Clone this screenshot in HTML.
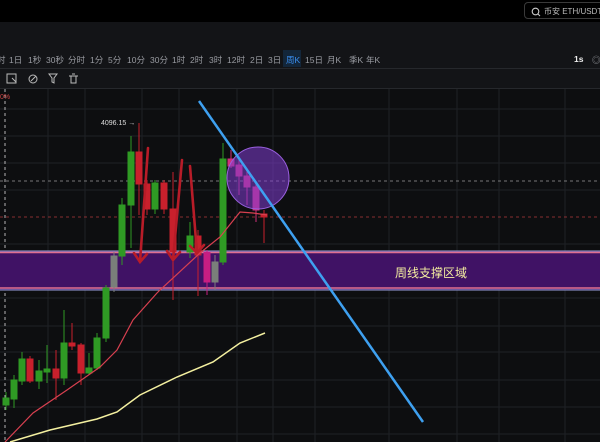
<!DOCTYPE html>
<html><head><meta charset="utf-8"><style>
body{margin:0;width:600px;height:442px;overflow:hidden;background:#0d0e10;font-family:"Liberation Sans","Noto Sans CJK SC",sans-serif;position:relative}
.top{position:absolute;left:0;top:0;width:600px;height:22px;background:#000}
.search{position:absolute;left:524px;top:2px;width:90px;height:17px;border:1px solid #3a3a3a;border-radius:4px;color:#bbb;font-size:8px;line-height:17px;box-sizing:border-box;padding-left:19px}
.bar2{position:absolute;left:0;top:22px;width:600px;height:27px;background:#131417;border-bottom:1px solid #26282c}
.tf{position:absolute;left:0;top:49px;width:600px;height:19px;background:#131417;border-bottom:1px solid #26282c;color:#9a9ca2;font-size:8.5px}
.tf span{position:absolute;top:5px}
.tools{position:absolute;left:0;top:69px;width:600px;height:19px;background:#131417;border-bottom:1px solid #26282c}
svg{position:absolute;left:0;top:0}
</style></head><body>
<div class="top"></div>
<div class="search"><svg width="10" height="10" style="left:6px;top:4px"><circle cx="4.5" cy="4.5" r="3.3" fill="none" stroke="#ccc" stroke-width="1.1"/><line x1="7" y1="7" x2="9" y2="9" stroke="#ccc"/></svg>币安 ETH/USDT</div>
<div class="bar2"></div>
<div class="tf">
<span style="left:-3px">时</span><span style="left:9px">1日</span><span style="left:28px">1秒</span><span style="left:46px">30秒</span><span style="left:68px">分时</span><span style="left:90px">1分</span><span style="left:108px">5分</span><span style="left:127px">10分</span><span style="left:150px">30分</span><span style="left:172px">1时</span><span style="left:190px">2时</span><span style="left:209px">3时</span><span style="left:227px">12时</span><span style="left:250px">2日</span><span style="left:268px">3日</span>
<span style="left:283px;top:1px;width:18px;height:17px;background:#13263a"></span><span style="left:286px;color:#3a8ef0">周K</span>
<span style="left:305px">15日</span><span style="left:327px">月K</span><span style="left:349px">季K</span><span style="left:366px">年K</span>
<span style="left:574px;color:#eee;font-weight:bold">1s</span><span style="left:592px">◎</span>
</div>
<div class="tools"><svg width="90" height="19" style="left:0;top:0">
<rect x="7" y="5" width="9" height="9" fill="none" stroke="#bbb"/><path d="M12 9l4 4" stroke="#bbb"/>
<circle cx="33" cy="10" r="4" fill="none" stroke="#bbb"/><path d="M31 12l5-5" stroke="#bbb"/>
<path d="M49 5h8l-3 4v5l-2-1v-4z" fill="none" stroke="#bbb"/>
<path d="M69 7h9M71 7v7h5v-7M72 5h3" fill="none" stroke="#bbb"/>
</svg></div>
<svg width="600" height="442" viewBox="0 0 600 442">
<g stroke="#1f2126" stroke-width="1">
<line x1="48" y1="89" x2="48" y2="442"/><line x1="85" y1="89" x2="85" y2="442"/><line x1="142" y1="89" x2="142" y2="442"/><line x1="179" y1="89" x2="179" y2="442"/><line x1="237" y1="89" x2="237" y2="442"/><line x1="273" y1="89" x2="273" y2="442"/><line x1="315" y1="89" x2="315" y2="442"/><line x1="389" y1="89" x2="389" y2="442"/><line x1="457" y1="89" x2="457" y2="442"/><line x1="499" y1="89" x2="499" y2="442"/><line x1="565" y1="89" x2="565" y2="442"/>
<line x1="0" y1="109" x2="600" y2="109"/><line x1="0" y1="136" x2="600" y2="136"/><line x1="0" y1="163" x2="600" y2="163"/><line x1="0" y1="190" x2="600" y2="190"/><line x1="0" y1="244" x2="600" y2="244"/><line x1="0" y1="298" x2="600" y2="298"/><line x1="0" y1="326" x2="600" y2="326"/><line x1="0" y1="352" x2="600" y2="352"/><line x1="0" y1="380" x2="600" y2="380"/><line x1="0" y1="407" x2="600" y2="407"/><line x1="0" y1="434" x2="600" y2="434"/>
</g>
<line x1="5" y1="89" x2="5" y2="442" stroke="#ddd" stroke-dasharray="3,3" stroke-width="0.8"/>
<line x1="0" y1="181" x2="600" y2="181" stroke="#999" stroke-dasharray="3,3" stroke-width="0.8"/>
<line x1="0" y1="217" x2="600" y2="217" stroke="#b0383c" stroke-dasharray="3,3" stroke-width="0.8"/>
<text x="0" y="99" fill="#c44" font-size="7">0%</text>
<rect x="0" y="251" width="600" height="39" fill="#401265"/>
<line x1="0" y1="251" x2="600" y2="251" stroke="#9aa0e0" stroke-width="1"/>
<line x1="0" y1="252.5" x2="600" y2="252.5" stroke="#e07090" stroke-width="1.5"/>
<line x1="0" y1="288" x2="600" y2="288" stroke="#e07090" stroke-width="1.5"/>
<line x1="0" y1="290" x2="600" y2="290" stroke="#9aa0e0" stroke-width="1"/>
<text x="395" y="277" fill="#f4eea0" font-size="12" font-family="Liberation Sans,Noto Sans CJK SC,sans-serif">周线支撑区域</text>
<g stroke-width="1">
<g fill="#2f9a24" stroke="#2f9a24">
<line x1="6" y1="392" x2="6" y2="410"/><rect x="3" y="398" width="6" height="7"/>
<line x1="14" y1="375" x2="14" y2="408"/><rect x="11" y="380" width="6" height="19"/>
<line x1="22" y1="352" x2="22" y2="385"/><rect x="19" y="359" width="6" height="22"/>
<line x1="39" y1="360" x2="39" y2="389"/><rect x="36" y="371" width="6" height="10"/>
<line x1="47" y1="345" x2="47" y2="383"/><rect x="44" y="369" width="6" height="3"/>
<line x1="64" y1="310" x2="64" y2="385"/><rect x="61" y="343" width="6" height="35"/>
<line x1="89" y1="353" x2="89" y2="375"/><rect x="86" y="368" width="6" height="5"/>
<line x1="97" y1="333" x2="97" y2="370"/><rect x="94" y="338" width="6" height="30"/>
<line x1="106" y1="285" x2="106" y2="342"/><rect x="103" y="288" width="6" height="50"/>
<line x1="122" y1="198" x2="122" y2="265"/><rect x="119" y="205" width="6" height="51"/>
<line x1="131" y1="136" x2="131" y2="248"/><rect x="128" y="152" width="6" height="53"/>
<line x1="155" y1="180" x2="155" y2="214"/><rect x="152" y="183" width="6" height="26"/>
<line x1="190" y1="222" x2="190" y2="258"/><rect x="187" y="236" width="6" height="16"/>
<line x1="223" y1="143" x2="223" y2="265"/><rect x="220" y="159" width="6" height="103"/>
</g>
<g fill="#c8202c" stroke="#c8202c">
<line x1="30" y1="356" x2="30" y2="383"/><rect x="27" y="359" width="6" height="22"/>
<line x1="56" y1="350" x2="56" y2="400"/><rect x="53" y="369" width="6" height="9"/>
<line x1="72" y1="323" x2="72" y2="350"/><rect x="69" y="343" width="6" height="3"/>
<line x1="81" y1="343" x2="81" y2="385"/><rect x="78" y="345" width="6" height="28"/>
<line x1="139" y1="123" x2="139" y2="215"/><rect x="136" y="152" width="6" height="32"/>
<line x1="147" y1="180" x2="147" y2="215"/><rect x="144" y="184" width="6" height="25"/>
<line x1="164" y1="180" x2="164" y2="214"/><rect x="161" y="183" width="6" height="26"/>
<line x1="173" y1="172" x2="173" y2="300"/><rect x="170" y="209" width="6" height="43"/>
<line x1="198" y1="230" x2="198" y2="296"/><rect x="195" y="236" width="6" height="19"/>
<line x1="264" y1="210" x2="264" y2="243"/><rect x="261" y="214" width="6" height="3"/>
</g>
<g fill="#7a7f7a" stroke="#7a7f7a"><line x1="114" y1="252" x2="114" y2="292"/><rect x="111" y="256" width="6" height="31"/>
<line x1="215" y1="255" x2="215" y2="290"/><rect x="212" y="262" width="6" height="20"/></g>
<g fill="#c81e82" stroke="#c81e82"><line x1="207" y1="250" x2="207" y2="295"/><rect x="204" y="252" width="6" height="30"/></g>
<g fill="#d0307a" stroke="#d0307a">
<line x1="231" y1="150" x2="231" y2="168"/><rect x="228" y="159" width="6" height="7"/>
<line x1="239" y1="158" x2="239" y2="195"/><rect x="236" y="165" width="6" height="11"/>
<line x1="247" y1="170" x2="247" y2="205"/><rect x="244" y="176" width="6" height="11"/>
<line x1="256" y1="182" x2="256" y2="222"/><rect x="253" y="187" width="6" height="23"/>
</g>
</g>
<text x="101" y="125" fill="#ddd" font-size="7">4096.15 →</text>
<polyline points="5,442 33,413 67,390 100,367 117,350 133,320 157,293 160,290 200,253 220,237 240,212 253,213 267,215" fill="none" stroke="#d84050" stroke-width="1.2"/>
<polyline points="10,442 50,430 97,419 117,412 140,395 177,377 213,362 240,343 265,333" fill="none" stroke="#f4f0a0" stroke-width="1.5"/>
<g stroke="#b81c28" stroke-width="2.6" fill="none" stroke-linecap="round">
<path d="M148,148 L140,262 M134,253 L140,262 L147,254"/>
<path d="M182,160 L173,260 M167,251 L173,260 L180,252"/>
<path d="M190,166 L197,253 M190,246 L197,253 L204,245"/>
</g>
<circle cx="258" cy="178" r="31" fill="rgba(130,60,210,0.55)" stroke="#9a60e0" stroke-width="1"/>
<line x1="199" y1="101" x2="423" y2="422" stroke="#3ea0f0" stroke-width="2.5"/>
</svg>
</body></html>
